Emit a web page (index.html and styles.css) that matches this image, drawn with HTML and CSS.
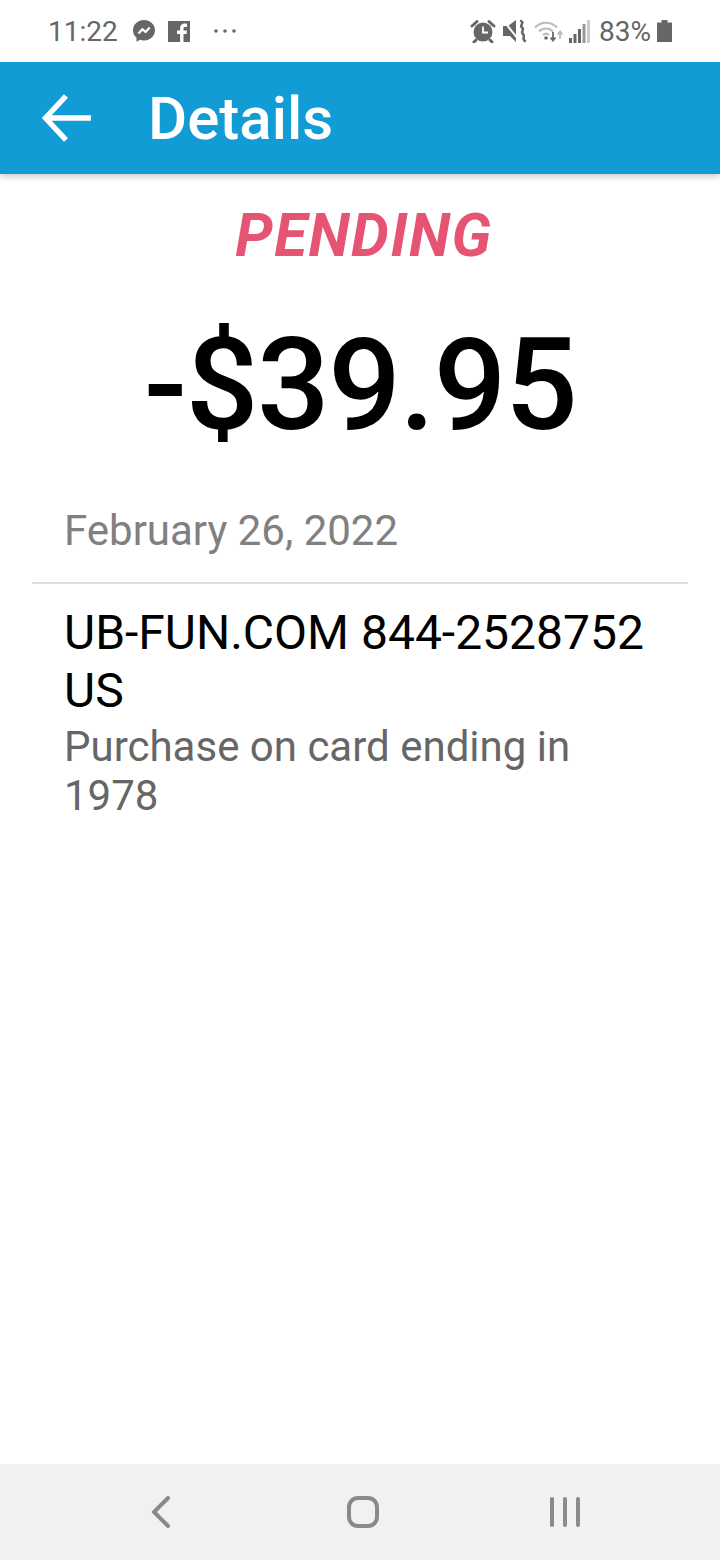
FILE: index.html
```html
<!DOCTYPE html>
<html lang="en">
<head>
    <meta charset="UTF-8">
    <meta name="viewport" content="width=device-width, initial-scale=1.0">
    <title>Details</title>
    <link rel="stylesheet" href="styles.css">
</head>
<body>
    <div class="phone">
        <div class="status-bar">
            <div class="status-left">
                <span class="clock">11:22</span>
                <svg class="icon-messenger" width="24" height="24" viewBox="0 0 24 24">
                    <path fill="#666" d="M12 1C5.900 1 1 5.500 1 11.300c0 3 1.300 5.700 3.500 7.500v4l3.500-2c1.300.5 2.600.7 4 .7 6.100 0 11-4.500 11-10.200S18.100 1 12 1z"/>
                    <path fill="none" stroke="#fff" stroke-width="2.200" stroke-linejoin="round" d="M6.500 14.500l3.800-4.300 3.200 2.800 4.200-4.500"/>
                </svg>
                <svg class="icon-fb" width="22" height="21" viewBox="0 0 22 21">
                    <path fill="#666" d="M0 0h22v21H15.500v-8h3l.5-3.500h-3.500V7.500c0-1 .4-1.600 1.700-1.600H19V2.800c-.5-.1-1.500-.2-2.500-.2-2.600 0-4.400 1.600-4.400 4.400v2.500H9V13h3.100v8H0z"/>
                </svg>
                <svg class="icon-more" width="24" height="6" viewBox="0 0 24 6">
                    <circle cx="3" cy="3" r="1.800" fill="#666"/>
                    <circle cx="12" cy="3" r="1.800" fill="#666"/>
                    <circle cx="21" cy="3" r="1.800" fill="#666"/>
                </svg>
            </div>
            <div class="status-right">
                <svg width="26" height="24" viewBox="0 0 26 24">
                    <circle cx="13" cy="13" r="9.500" fill="#666"/>
                    <path fill="none" stroke="#fff" stroke-width="1.800" d="M13 7.500V13.500H18"/>
                    <path fill="none" stroke="#666" stroke-width="3" stroke-linecap="round" d="M2 7l5-4.500M24 7l-5-4.500M6 21l-2 2M20 21l2 2"/>
                </svg>
                <svg class="icon-mute" width="24" height="24" viewBox="0 0 24 24">
                    <path fill="#666" d="M0 7h5l8-6v22l-6-6H0z"/>
                    <path fill="none" stroke="#fff" stroke-width="2" d="M0 1l15 19"/>
                    <path fill="none" stroke="#666" stroke-width="2.500" stroke-linecap="round" d="M18 2c4 2-2 4 1 6.500s-2 4 1 6.500-2 4 2 7"/>
                </svg>
                <svg class="icon-wifi" width="30" height="24" viewBox="0 0 30 24">
                    <path fill="none" stroke="#bbb" stroke-width="2" d="M1 8.500c6-6.500 16-6.500 22 0M5 12.500c4-4 10-4 14 0M9 16c2-1.800 4-1.800 6 0"/>
                    <circle cx="12" cy="19" r="1.800" fill="#666"/>
                    <path fill="none" stroke="#666" stroke-width="1.800" d="M19 13v8M16.500 18.500l2.500 3 2.500-3"/>
                    <path fill="none" stroke="#bbb" stroke-width="1.800" d="M26 20v-7M23.500 15.500l2.500-3 2.500 3"/>
                </svg>
                <svg class="icon-signal" width="21" height="23" viewBox="0 0 21 23">
                    <rect x="0" y="18" width="3" height="5" fill="#666"/>
                    <rect x="4.500" y="14" width="3" height="9" fill="#666"/>
                    <rect x="9" y="9" width="3" height="14" fill="#666"/>
                    <rect x="13.500" y="4" width="3" height="19" fill="#999"/>
                    <rect x="18" y="0" width="3" height="23" fill="#ccc"/>
                </svg>
                <span class="battery-pct">83%</span>
                <svg class="icon-battery" width="15" height="22" viewBox="0 0 15 22">
                    <path fill="#666" d="M4.500 0h6v2.500H14.500a.5.5 0 0 1 .5.5V21.500a.5.5 0 0 1-.5.5H.5a.5.5 0 0 1-.5-.5V3a.5.5 0 0 1 .5-.5H4.500z"/>
                </svg>
            </div>
        </div>

        <header class="app-bar">
            <svg class="back-arrow" width="50" height="50" viewBox="0 0 50 50">
                <path fill="none" stroke="#fff" stroke-width="5.500" d="M49 25H5M24 3L3.500 25 24 47"/>
            </svg>
            <h1>Details</h1>
        </header>

        <main class="details">
            <div class="state">PENDING</div>
            <div class="amount">-$39.95</div>
            <div class="date">February 26, 2022</div>
            <div class="rule"></div>
            <div class="merchant">UB-FUN.COM 844-2528752 US</div>
            <div class="note">Purchase on card ending in 1978</div>
        </main>

        <nav class="nav-bar">
            <svg width="20" height="32" viewBox="0 0 20 32">
                <path fill="none" stroke="#8a8a8a" stroke-width="4" stroke-linecap="round" stroke-linejoin="round" d="M17 2L3 16l14 14"/>
            </svg>
            <svg class="nav-home" width="32" height="32" viewBox="0 0 32 32">
                <rect x="2" y="2" width="28" height="28" rx="9" fill="none" stroke="#8a8a8a" stroke-width="4"/>
            </svg>
            <svg width="30" height="30" viewBox="0 0 30 30">
                <path fill="none" stroke="#8a8a8a" stroke-width="4" stroke-linecap="round" d="M2 2v26M15 2v26M28 2v26"/>
            </svg>
        </nav>
    </div>
</body>
</html>
```

FILE: styles.css
```css
* {
    box-sizing: border-box;
}

body {
    margin: 0;
    background-color: #fff;
    font-family: Roboto, "Liberation Sans", sans-serif;
}

.phone {
    width: 720px;
    height: 1560px;
    display: flex;
    flex-direction: column;
    overflow: hidden;
}

.status-bar {
    height: 62px;
    flex: none;
    padding: 0 48px 0 48px;
    display: flex;
    align-items: center;
    justify-content: space-between;
    color: #666;
    font-size: 28px;
}

.status-left,
.status-right {
    display: flex;
    align-items: center;
}

.clock {
    margin-right: 14px;
}

.icon-fb {
    margin-left: 12px;
}

.icon-more {
    margin-left: 23px;
}

.icon-mute {
    margin-left: 7px;
}

.icon-wifi {
    margin-left: 7px;
}

.icon-signal {
    margin-left: 5px;
}

.battery-pct {
    margin-left: 9px;
}

.icon-battery {
    margin-left: 6px;
}

.app-bar {
    height: 112px;
    flex: none;
    background-color: #119cd6;
    box-shadow: 0 3px 6px rgba(0, 0, 0, 0.2);
    display: flex;
    align-items: center;
    padding-left: 42px;
    color: #fff;
}

.app-bar h1 {
    margin: 0 0 0 56px;
    font-size: 60px;
    font-weight: 500;
}

.details {
    flex: 1;
    display: flex;
    flex-direction: column;
    padding: 0 32px;
}

.state {
    margin-top: 30px;
    padding-left: 8px;
    text-align: center;
    font-size: 60px;
    line-height: 64px;
    letter-spacing: 1.5px;
    font-style: italic;
    font-weight: 700;
    color: #e65474;
}

.amount {
    margin-top: 47px;
    text-align: center;
    font-size: 128px;
    line-height: 140px;
    letter-spacing: -1.5px;
    font-weight: 500;
    color: #000;
}

.date {
    margin-top: 48px;
    padding: 0 32px;
    font-size: 42px;
    line-height: 56px;
    color: #808080;
}

.rule {
    margin-top: 23px;
    height: 2px;
    background-color: #ddd;
}

.merchant {
    margin-top: 20px;
    padding: 0 32px;
    font-size: 48px;
    line-height: 58px;
    color: #000;
}

.note {
    margin-top: 2px;
    padding: 0 32px;
    font-size: 42px;
    line-height: 49px;
    color: #666;
}

.nav-bar {
    height: 96px;
    flex: none;
    background-color: #f1f1f1;
    display: flex;
    align-items: center;
    justify-content: space-between;
    padding: 0 140px 0 151px;
}

.nav-home {
    margin-left: 4px;
}
```
